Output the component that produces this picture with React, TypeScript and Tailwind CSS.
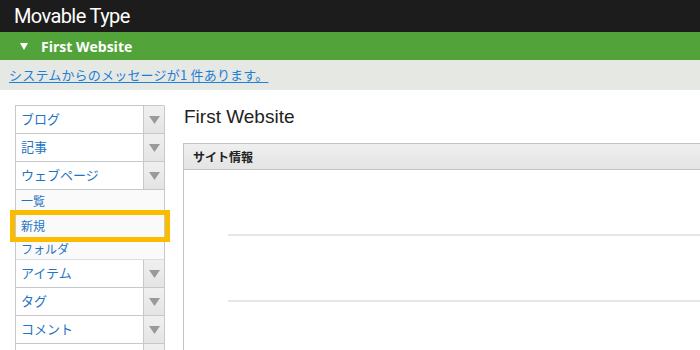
const jp = { fontFamily: '"Noto Sans CJK JP", "Liberation Sans", sans-serif' };

const Arrow = () => (
  <div className="w-[21px] self-stretch flex items-center justify-center border-l border-[#c6c9cc] bg-gradient-to-b from-[#f0f0f0] to-[#e4e4e4]">
    <svg width="11" height="8" viewBox="0 0 11 8">
      <path d="M0 0 L11 0 L5.5 8 Z" fill="#9a9a9a" />
    </svg>
  </div>
);

const MenuRow = ({ label }: { label: string }) => (
  <div className="h-[28px] flex items-stretch border-b border-[#c6c9cc] bg-white">
    <div className="flex-1 flex items-center pl-[5px] pb-[2px] text-[13px] text-[#1f74c4]">{label}</div>
    <Arrow />
  </div>
);

const SubRow = ({ label, h }: { label: string; h: string }) => (
  <div className={`${h} flex items-center pl-[5px] text-[12px] text-[#1f74c4] bg-[#fafafa] border-b border-[#dcdfe2]`}>
    {label}
  </div>
);

export default function App() {
  return (
    <div className="w-[700px] h-[350px] overflow-hidden bg-white" style={jp}>
      <div className="h-[32px] bg-[#1c1c1c] flex items-center pl-[14px]">
        <span className="text-white text-[20px] tracking-[-0.6px]" style={{ fontFamily: 'Roboto, sans-serif' }}>
          Movable Type
        </span>
      </div>
      <div className="h-[28px] bg-[#52a43a] flex items-center pl-[20px] gap-[13px]">
        <svg width="8" height="7" viewBox="0 0 8 7">
          <path d="M0 0 L8 0 L4 7 Z" fill="#fff" />
        </svg>
        <span className="text-white text-[14px] font-bold" style={{ fontFamily: '"Open Sans", sans-serif' }}>
          First Website
        </span>
      </div>
      <div className="h-[30px] bg-[#e6e8e3] flex items-center pl-[9px]">
        <a className="text-[13px] tracking-[0.2px] text-[#1e7fd6] underline underline-offset-2">システムからのメッセージが1 件あります。</a>
      </div>
      <div className="flex pt-[15px]">
        <div className="w-[169px] pl-[15px] shrink-0">
          <div className="w-[150px] border-t border-l border-r border-[#c6c9cc] rounded-tr-[2px]">
            <MenuRow label="ブログ" />
            <MenuRow label="記事" />
            <MenuRow label="ウェブページ" />
            <SubRow label="一覧" h="h-[23px]" />
            <div className="relative">
              <SubRow label="新規" h="h-[26px]" />
              <div className="absolute left-[-6px] right-[-6px] top-[-3px] bottom-[-3px] border-[5px] border-[#fbbc00]" />
            </div>
            <SubRow label="フォルダ" h="h-[21px]" />
            <MenuRow label="アイテム" />
            <MenuRow label="タグ" />
            <MenuRow label="コメント" />
            <MenuRow label="" />
          </div>
        </div>
        <div className="flex-1 pl-[14px]">
          <div className="h-[24px] flex items-center pl-px text-[19px] text-[#222]" style={{ fontFamily: '"Liberation Sans", sans-serif' }}>
            First Website
          </div>
          <div className="mt-[14px] border-l border-[#c0c4c8] h-[220px]">
            <div className="h-[27px] border-t border-b border-[#c0c4c8] bg-gradient-to-b from-[#efefef] to-[#e4e4e4] flex items-center pl-[9px] text-[12px] font-bold text-[#222]">
              サイト情報
            </div>
            <div className="pl-[44px] pt-[64px]">
              <div className="h-[2px] bg-[#e6e6e6]" />
              <div className="h-[2px] bg-[#e6e6e6] mt-[64px]" />
            </div>
          </div>
        </div>
      </div>
    </div>
  );
}
